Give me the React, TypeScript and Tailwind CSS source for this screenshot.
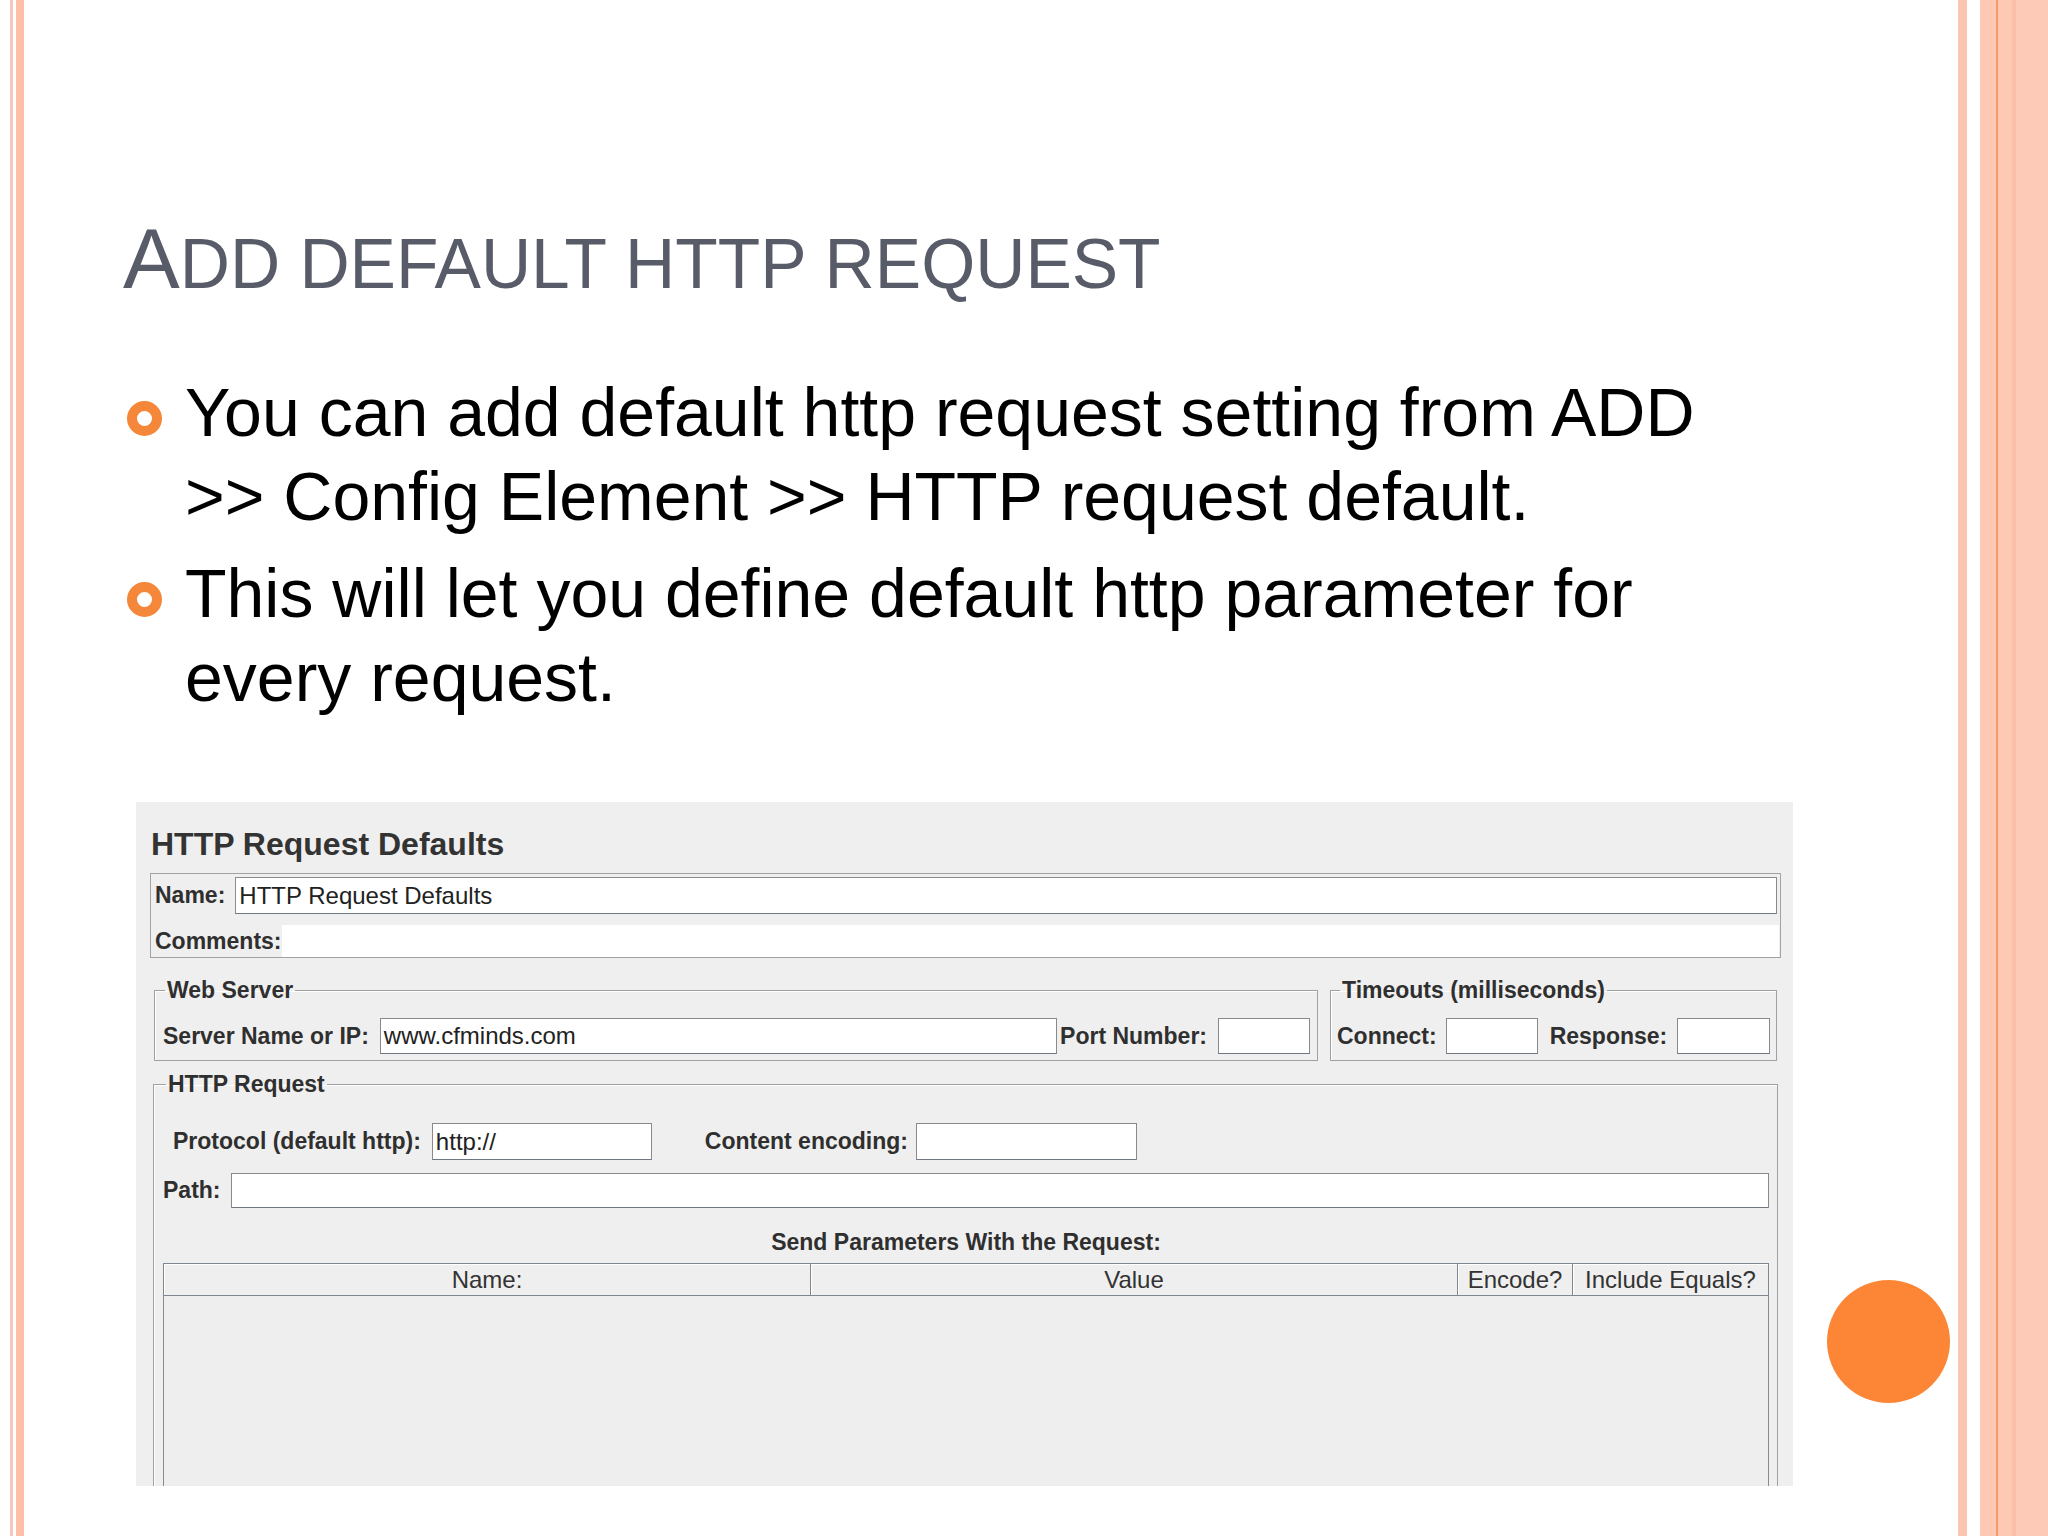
import React from 'react';

const label = 'whitespace-nowrap text-[23px] font-bold leading-none text-[#2f2f2f]';
const field = 'border border-[#8a8a8a] border-b-[#6f7782] bg-white';

function Input({ className = '', value }: { className?: string; value?: string }) {
  return (
    <div className={`${field} flex items-center pl-[3px] text-[24px] leading-none text-[#222] ${className}`}>
      {value}
    </div>
  );
}

function Bullet({ children, className = '' }: { children: React.ReactNode; className?: string }) {
  return (
    <li className={`flex ${className}`}>
      <span className="ml-[103px] mt-[31px] h-[35px] w-[35px] shrink-0 rounded-full border-[10px] border-[#f5873a]" />
      <p className="ml-[23px] text-[68px] leading-[84px] text-black">{children}</p>
    </li>
  );
}

function HeaderCell({ children, w, first }: { children: React.ReactNode; w: string; first?: boolean }) {
  return (
    <div
      className={`${w} flex h-full items-center justify-center border-r border-[#7f8790] ${
        first ? 'border-l' : ''
      } text-[24px] leading-none text-[#333] shadow-[inset_1px_1px_0_#ffffff]`}
    >
      {children}
    </div>
  );
}

export default function App() {
  return (
    <div className="flex h-[1536px] w-[2048px] overflow-hidden bg-white font-['Liberation_Sans',Arial,sans-serif]">
      {/* left slide border */}
      <div className="w-[10px] shrink-0" />
      <div className="w-[3px] shrink-0 bg-[#f6c7bb]" />
      <div className="w-[3px] shrink-0" />
      <div className="w-[8px] shrink-0 bg-[#fdbfa9]" />

      <main className="flex w-[1934px] shrink-0 flex-col">
        <h1 className="ml-[99px] mt-[216px] h-[85px] text-[85px] font-normal leading-none text-[#585c68]">
          A<span className="text-[69.5px]">DD DEFAULT HTTP REQUEST</span>
        </h1>

        <ul className="mt-[69px]">
          <Bullet>
            You can add default http request setting from ADD
            <br />
            &gt;&gt; Config Element &gt;&gt; HTTP request default.
          </Bullet>
          <Bullet className="mt-[13px]">
            This will let you define default http parameter for
            <br />
            every request.
          </Bullet>
        </ul>

        <div className="mt-[83px] flex">
          {/* JMeter screenshot */}
          <div className="ml-[112px] h-[684px] w-[1657px] shrink-0 overflow-hidden bg-[#efefef]">
            <div className="pl-[15px] pt-[22px] text-[32px] font-bold leading-[40px] text-[#333]">
              HTTP Request Defaults
            </div>

            <div className="ml-[14px] mt-[9px] w-[1631px] border border-[#a3a3a3] pt-[3px]">
              <div className="flex h-[37px] items-center pl-[4px] pr-[3px]">
                <span className={label}>Name:</span>
                <Input className="ml-[10px] h-[37px] flex-1" value="HTTP Request Defaults" />
              </div>
              <div className="mt-[11px] flex h-[32px] items-stretch pl-[4px] pr-[1px]">
                <span className={`${label} self-center`}>Comments:</span>
                <div className="flex-1 bg-white" />
              </div>
            </div>

            <div className="ml-[18px] mt-[21px] flex gap-[12px]">
              <fieldset className="w-[1164px] border border-[#a0a0a0] pb-[6px] pl-[8px] pr-[7px] pt-[16px] shadow-[inset_1px_1px_0_#ffffff]">
                <legend className={`${label} ml-[2px] px-[2px] leading-[24px]`}>Web Server</legend>
                <div className="flex h-[36px] items-center">
                  <span className={label}>Server Name or IP:</span>
                  <Input className="ml-[11px] h-[36px] flex-1" value="www.cfminds.com" />
                  <span className={`${label} ml-[3px]`}>Port Number:</span>
                  <Input className="ml-[11px] h-[36px] w-[92px]" />
                </div>
              </fieldset>
              <fieldset className="w-[447px] border border-[#a0a0a0] pb-[6px] pl-[6px] pr-[5px] pt-[16px] shadow-[inset_1px_1px_0_#ffffff]">
                <legend className={`${label} ml-[3px] px-[2px] leading-[24px]`}>Timeouts (milliseconds)</legend>
                <div className="flex h-[36px] items-center">
                  <span className={label}>Connect:</span>
                  <Input className="ml-[9px] h-[36px] w-[92px]" />
                  <span className={`${label} ml-[12px]`}>Response:</span>
                  <Input className="ml-[10px] h-[36px] w-[93px]" />
                </div>
              </fieldset>
            </div>

            <fieldset className="ml-[17px] mt-[12px] w-[1625px] border border-[#a0a0a0] pl-[9px] pr-[8px] pt-[27px] shadow-[inset_1px_1px_0_#ffffff]">
              <legend className={`${label} ml-[3px] px-[2px] leading-[24px]`}>HTTP Request</legend>
              <div className="ml-[10px] flex h-[37px] items-center">
                <span className={label}>Protocol (default http):</span>
                <Input className="ml-[11px] h-[37px] w-[220px]" value="http://" />
                <span className={`${label} ml-[53px]`}>Content encoding:</span>
                <Input className="ml-[8px] h-[37px] w-[221px]" />
              </div>
              <div className="mt-[13px] flex h-[35px] items-center">
                <span className={label}>Path:</span>
                <Input className="ml-[10px] h-[35px] flex-1" />
              </div>
              <div className={`${label} mt-[17px] flex h-[34px] items-center justify-center`}>
                Send Parameters With the Request:
              </div>
              <div className="mt-[4px]">
                <div className="flex h-[33px] border-y border-[#7f8790]">
                  <HeaderCell w="w-[648px]" first>
                    Name:
                  </HeaderCell>
                  <HeaderCell w="w-[647px]">Value</HeaderCell>
                  <HeaderCell w="w-[115px]">Encode?</HeaderCell>
                  <HeaderCell w="w-[196px]">Include Equals?</HeaderCell>
                </div>
                <div className="h-[400px] w-[1606px] border-x border-[#8a8a8a] bg-[#eeeeef]" />
              </div>
            </fieldset>
          </div>

          <div className="ml-[34px] mt-[478px] h-[123px] w-[123px] shrink-0 rounded-full bg-[#fd8636]" />
        </div>
      </main>

      {/* right slide border */}
      <div className="w-[9px] shrink-0 bg-[#fcc5b1]" />
      <div className="w-[13px] shrink-0" />
      <div className="w-[16px] shrink-0 bg-[#fdc8b4]" />
      <div className="w-[2px] shrink-0 bg-[#f39a66]" />
      <div className="w-[14px] shrink-0 bg-[#fdc8b4]" />
      <div className="w-[4px] shrink-0 bg-[#fbbfa9]" />
      <div className="flex-1 bg-[#fccab7]" />
    </div>
  );
}
